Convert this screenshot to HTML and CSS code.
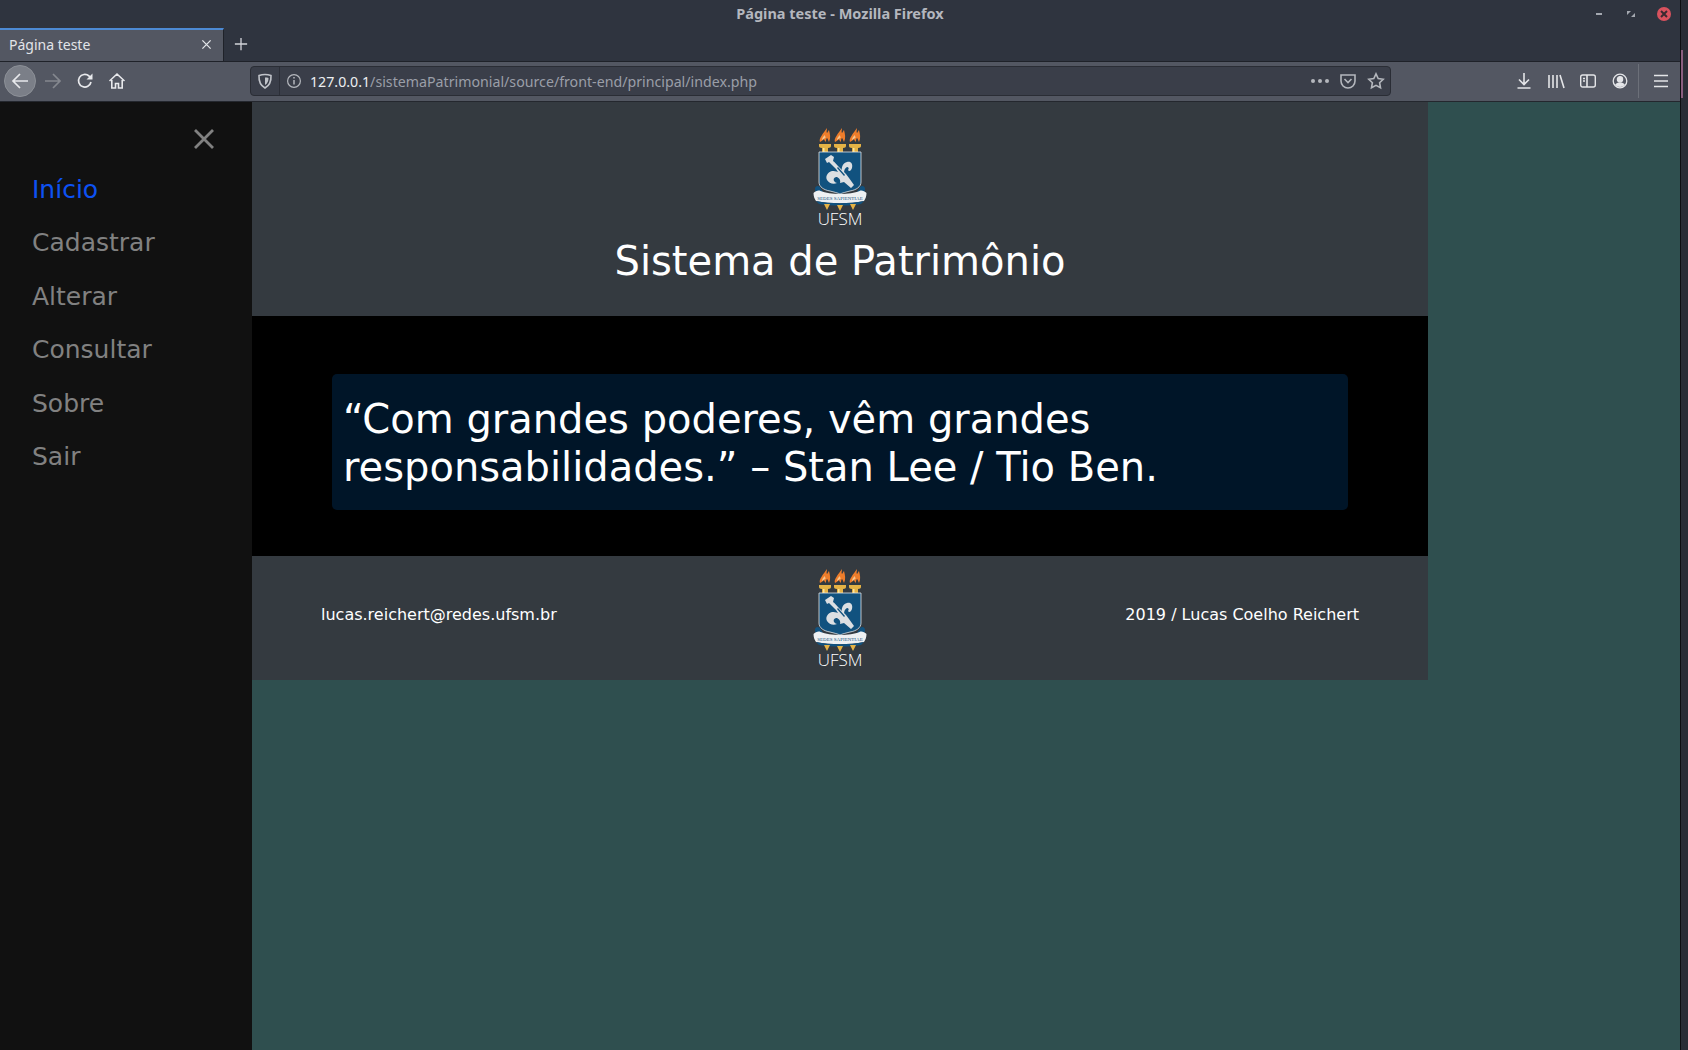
FILE: index.html
```html
<!DOCTYPE html>
<html>

	<head>
		<meta charset="UTF-8">
		<title>Página teste</title>
		<link rel="stylesheet" href="styles.css">
	</head>

	<body>
		<svg class="defs" width="0" height="0">
			<symbol id="torch" viewBox="0 0 12 26">
				<path fill="#ee7d2b" d="M1 15c-1-3 1-5 2-7 1-2 3-4 5-7 0 2-1 4 0 5 1-1 1-2 2-3 1 4 2 8 0 12-1-2-1-3-2-4-1 1-1 2-1 4-1-1-2-2-2-3-1 1-2 2-4 3z"/>
				<path fill="#f7c58e" d="M3 13c0-2 1-3 3-5 0 1 0 2 1 2-1 1-2 2-4 3z"/>
				<path fill="#e5b245" d="M0 17h12v2c0 1-1 2-3 2v4h-6v-4c-2 0-3-1-3-2z"/>
				<path fill="#fbe39a" d="M4 21h1.500v4h-1.500z"/>
			</symbol>
			<symbol id="crest" viewBox="0 0 54 84">
				<use href="#torch" x="6" y="0" width="12" height="26"/>
				<use href="#torch" x="21" y="0" width="12" height="26"/>
				<use href="#torch" x="36" y="0" width="12" height="26"/>
				<path fill="#11527f" stroke="#dfe4e8" stroke-width=".8" d="M6 25h42v30c0 5-5 8-11 9-4 1-8 2-10 3-2-1-6-2-10-3-6-1-11-4-11-9z"/>
				<path fill="#dcdfe2" d="M12 32l6-4 3 2-1 4c2 1 3 3 5 5l5 5 3 3 3 4 5 7-3 3-7-6-4 1c1-3-1-5-3-6-2 0-4 1-3 4 1 1 2 2 3 2-4 2-8 0-10-3-2-4 1-8 5-9 2 0 4 0 6 1l-2-3-4-4-3-3-2 1z"/>
				<path fill="#dcdfe2" d="M29 45c-1-5 1-9 5-10 4-1 6 2 5 6-1 3-3 4-4 2 1-1 1-3-1-3-2 1-3 3-3 6l1 3z"/>
				<path fill="#11527f" d="M24 41l1-1 7 8-1 1z"/>
				<path fill="#11527f" d="M2 62c0-3 3-4 5-2l3 5-7 3zM52 62c0-3-3-4-5-2l-3 5 7 3z"/>
				<path fill="#eef0f2" d="M.5 66c2-2 5-3 7-2 5 2 12 3 19.500 3s15-1 19.500-3c2-1 5 0 7 2 0 3-1 6-2.500 8-15 3-33 3-48 0-1.500-2-2.500-5-2.500-8z"/>
				<path fill="#11527f" d="M3 74c14 3 34 3 48 0l-3 3c-13 2-29 2-42 0z"/>
				<path fill="#e5b245" d="M11 77h6l-3 6zM24 78h6l-3 6zM37 77h6l-3 6z"/>
			</symbol>
		</svg>

		<div class="window">
			<header class="chrome">
				<div class="titlebar">
					<span class="winTitle">Página teste - Mozilla Firefox</span>
					<div class="winBtns">
						<svg class="winBtn" viewBox="0 0 12 12"><path fill="#a4a8b0" d="M0 5h6v2h-6z" transform="translate(3)"/></svg>
						<svg class="winBtn" viewBox="0 0 12 12"><path fill="#a4a8b0" d="M2 3h4l-4 4zM10 9h-4l4-4z"/></svg>
						<span class="winClose"><svg viewBox="0 0 14 14"><path stroke="#3a2a30" stroke-width="2" d="M4 4l6 6M10 4l-6 6"/></svg></span>
					</div>
				</div>
				<div class="tabs">
					<div class="tab">
						<span>Página teste</span>
						<svg class="tabX" viewBox="0 0 12 12"><path stroke="#e4e6ea" stroke-width="1.400" d="M1.500 1.500l9 9M10.500 1.500l-9 9"/></svg>
					</div>
					<svg class="newTab" viewBox="0 0 16 16"><path stroke="#d2d4d9" stroke-width="1.500" d="M8 1v14M1 8h14"/></svg>
				</div>
				<div class="toolbar">
					<div class="navBtns">
						<span class="backBtn"><svg class="ico" viewBox="0 0 18 18" fill="none" stroke="#e8e9ec" stroke-width="1.700"><path d="M2 9h15M9 2l-7 7 7 7"/></svg></span>
						<svg class="ico" viewBox="0 0 18 18" fill="none" stroke="#85888f" stroke-width="1.700"><path d="M1 9h15M9 2l7 7-7 7"/></svg>
						<svg class="ico" viewBox="0 0 18 18" fill="none" stroke="#e8e9ec" stroke-width="1.700"><path d="M15 10a6.300 6.300 0 1 1-2-6l2.500 2.500"/><path fill="#e8e9ec" stroke="none" d="M16.500 1.500v6h-6z"/></svg>
						<svg class="ico" viewBox="0 0 18 18" fill="none" stroke="#e8e9ec" stroke-width="1.600"><path d="M1.500 9l7.500-7 7.500 7M3.800 8v8h3.700v-4.500h3v4.500h3.700v-8"/></svg>
					</div>
					<div class="urlbar">
						<span class="urlLeft">
							<svg class="ico" viewBox="0 0 18 18"><path fill="none" stroke="#c0c3c9" stroke-width="1.600" d="M3 3.500c4-1.300 8-1.300 12 0 .3 5.500-1.500 10-6 12.500-4.500-2.500-6.300-7-6-12.500z"/><path fill="#c0c3c9" d="M9 5.500c1.500 0 2.500.1 3.500.4 0 3-1 5.500-3.500 7.200z"/></svg>
						</span>
						<svg class="ico infoIco" viewBox="0 0 18 18" fill="none" stroke="#b4b7bd" stroke-width="1.200"><circle cx="9" cy="9" r="6.400"/><path stroke-width="1.500" d="M9 8v4.500M9 5v1.500"/></svg>
						<span class="url"><b>127.0.0.1</b>/sistemaPatrimonial/source/front-end/principal/index.php</span>
						<span class="dots"><i></i><i></i><i></i></span>
						<svg class="ico" viewBox="0 0 18 18" fill="none" stroke="#b4b7bd" stroke-width="1.600"><path d="M2 3h14v6a7 7 0 0 1-14 0z"/><path d="M5.500 7l3.500 3.500 3.500-3.500"/></svg>
						<svg class="ico" viewBox="0 0 18 18" fill="none" stroke="#b4b7bd" stroke-width="1.600"><path d="M9 1.800l2.200 4.700 5 .7-3.600 3.500.9 5.100-4.500-2.500-4.500 2.500.9-5.100-3.600-3.500 5-.7z"/></svg>
					</div>
					<div class="tools">
						<svg class="ico" viewBox="0 0 18 18" fill="none" stroke="#e4e5e8" stroke-width="1.600"><path d="M9 1v11M4 7.500l5 5 5-5M2.500 16h13"/></svg>
						<svg class="ico" viewBox="0 0 18 18" fill="none" stroke="#e4e5e8" stroke-width="1.600"><path d="M2 3v13M6 3v13M10 3v13M13 3l4 13"/></svg>
						<svg class="ico" viewBox="0 0 18 18" fill="none" stroke="#e4e5e8" stroke-width="1.400"><rect x="1.700" y="3" width="14.600" height="12" rx="2"/><path stroke-width="1.600" d="M8 3v12M4 6.500h2M4 9h2"/></svg>
						<svg class="ico" viewBox="0 0 18 18" fill="none" stroke="#e4e5e8" stroke-width="1.300"><circle cx="9" cy="9" r="6.800"/><circle cx="9" cy="7.200" r="2.600" fill="#e4e5e8"/><path fill="#e4e5e8" stroke="none" d="M4 13c1-2 3-2.800 5-2.800s4 .8 5 2.800c-3 2.500-7 2.500-10 0z"/></svg>
						<span class="sep"></span>
						<svg class="ico" viewBox="0 0 18 18" fill="none" stroke="#e4e5e8" stroke-width="1.700"><path d="M2 3.500h14M2 9h14M2 14.500h14"/></svg>
					</div>
				</div>
			</header>

			<div class="page">
				<aside class="sidebar">
					<div class="closeRow">
						<svg class="closeX" viewBox="0 0 20 20"><path stroke="#818181" stroke-width="2.800" d="M1 1l18 18M19 1l-18 18"/></svg>
					</div>
					<nav class="sideNav">
						<a class="active" href="#">Início</a>
						<a href="#">Cadastrar</a>
						<a href="#">Alterar</a>
						<a href="#">Consultar</a>
						<a href="#">Sobre</a>
						<a href="#">Sair</a>
					</nav>
				</aside>
				<main class="content">
					<section class="top">
						<div class="logo">
							<svg class="crest" viewBox="0 0 54 84"><use href="#crest"/><text class="motto" x="27" y="72.500" text-anchor="middle">SEDES SAPIENTIAE</text></svg>
							<span>UFSM</span>
						</div>
						<h1>Sistema de Patrimônio</h1>
					</section>
					<section class="middle">
						<p class="quote">“Com grandes poderes, vêm grandes responsabilidades.” – Stan Lee / Tio Ben.</p>
					</section>
					<footer class="bottom">
						<span>lucas.reichert@redes.ufsm.br</span>
						<div class="logo">
							<svg class="crest" viewBox="0 0 54 84"><use href="#crest"/><text class="motto" x="27" y="72.500" text-anchor="middle">SEDES SAPIENTIAE</text></svg>
							<span>UFSM</span>
						</div>
						<span>2019 / Lucas Coelho Reichert</span>
					</footer>
				</main>
			</div>
		</div>
		<div class="desktop"><span class="desktopLine"></span></div>
	</body>

</html>
```

FILE: styles.css
```css
html,
body {
	width: 100%;
	height: 100%;
	margin: 0;
	overflow: hidden;
}

body {
	display: flex;
	font-family: "DejaVu Sans", sans-serif;
	background: #2c2f38;
}

.defs {
	position: absolute;
}

.window {
	width: 1680px;
	height: 1050px;
	border-right: 1px solid #0d0e11;
	display: flex;
	flex-direction: column;
	flex: none;
}

.desktop {
	flex: 1;
	padding-top: 50px;
	background: #2a2d36;
}

.desktopLine {
	display: block;
	width: 2px;
	height: 48px;
	background: #8a5f80;
}

/* firefox chrome */
.chrome {
	background: #2f343f;
	font-family: "Noto Sans", sans-serif;
	flex: none;
}

.titlebar {
	height: 28px;
	display: flex;
	justify-content: center;
	align-items: center;
	position: relative;
}

.winTitle {
	font: bold 14.500px "Noto Sans", sans-serif;
	color: #b4b7be;
	margin-bottom: 2px;
}

.winBtns {
	position: absolute;
	right: 9px;
	top: 7px;
	display: flex;
	align-items: center;
	gap: 20px;
}

.winBtn {
	width: 12px;
	height: 12px;
}

.winClose {
	width: 14px;
	height: 14px;
	border-radius: 50%;
	background: #d9525e;
	display: flex;
}

.tabs {
	height: 33px;
	display: flex;
	align-items: center;
}

.tab {
	width: 224px;
	height: 33px;
	box-sizing: border-box;
	border-top: 2px solid #4d8ad4;
	border-right: 1px solid #1f2229;
	background: #535762;
	color: #e2e4e8;
	font-size: 14px;
	display: flex;
	align-items: center;
	justify-content: space-between;
	padding: 0 11px 2px 9px;
}

.tabX {
	width: 11px;
	height: 11px;
}

.newTab {
	width: 14px;
	height: 14px;
	margin: 0 0 2px 10px;
}

.toolbar {
	height: 41px;
	box-sizing: border-box;
	background: #535762;
	border-top: 1px solid #1f2229;
	border-bottom: 1px solid #24272e;
	display: flex;
	align-items: center;
	padding-bottom: 1px;
}

.ico {
	width: 18px;
	height: 18px;
	flex: none;
}

.navBtns {
	width: 250px;
	padding-left: 4px;
	box-sizing: border-box;
	display: flex;
	align-items: center;
	gap: 14px;
	flex: none;
}

.backBtn {
	width: 32px;
	height: 32px;
	border-radius: 50%;
	background: #7b7f88;
	border: 1px solid #8c9097;
	box-sizing: border-box;
	display: flex;
	align-items: center;
	justify-content: center;
	margin-right: -6px;
}

.urlbar {
	width: 1141px;
	height: 30px;
	box-sizing: border-box;
	background: #3a3e49;
	border: 1px solid #2a2d35;
	border-radius: 4px;
	display: flex;
	align-items: center;
	gap: 10px;
	padding-right: 5px;
	color: #9a9ea8;
	font-size: 14.200px;
	flex: none;
}

.urlLeft {
	height: 100%;
	display: flex;
	align-items: center;
	padding: 0 5px 0 5px;
	border-right: 1px solid #2c2f38;
	margin-right: -5px;
}

.infoIco {
	margin-right: -3px;
}

.url {
	flex: 1;
}

.url b {
	font-weight: normal;
	color: #eceef1;
}

.dots {
	display: flex;
	gap: 3px;
}

.dots i {
	width: 4px;
	height: 4px;
	border-radius: 50%;
	background: #b4b7bd;
}

.tools {
	flex: 1;
	display: flex;
	justify-content: flex-end;
	align-items: center;
	gap: 14px;
	padding-right: 10px;
}

.sep {
	width: 1px;
	height: 34px;
	margin: 0 -1px 0 -5px;
	background: #6c7079;
}

/* page */
.page {
	flex: 1;
	display: flex;
	background: #2f4f4f;
	align-items: flex-start;
	min-height: 0;
}

.sidebar {
	width: 252px;
	align-self: stretch;
	background: #111111;
	flex: none;
}

.closeRow {
	display: flex;
	justify-content: flex-end;
	padding: 27px 38px 0 0;
}

.closeX {
	width: 20px;
	height: 20px;
}

.sideNav {
	margin-top: 14px;
	display: flex;
	flex-direction: column;
}

.sideNav a {
	font-size: 25px;
	line-height: 53.400px;
	padding-left: 32px;
	color: #818181;
	text-decoration: none;
}

.sideNav a.active {
	color: #0d52f2;
}

.content {
	width: 1176px;
	color: #fff;
}

.top {
	height: 214px;
	background: #343a40;
	box-sizing: border-box;
	padding-top: 25px;
	display: flex;
	flex-direction: column;
	align-items: center;
}

.top h1 {
	margin: 10px 0 0;
	font-size: 40px;
	line-height: 48px;
	font-weight: normal;
}

.logo {
	display: flex;
	flex-direction: column;
	align-items: center;
	color: #fff;
}

.crest {
	width: 54px;
	height: 84px;
}

.motto {
	font: 5px "Liberation Serif", serif;
	fill: #11527f;
}

.logo span {
	font: 300 17px/17px "Open Sans", sans-serif;
	margin-top: -1px;
}

.middle {
	height: 240px;
	background: #000;
	box-sizing: border-box;
	padding: 58px 80px 0;
}

.quote {
	margin: 0;
	height: 136px;
	box-sizing: border-box;
	padding: 21px 11px 0;
	border-radius: 5px;
	background: #001528;
	font-size: 40px;
	line-height: 48px;
}

.bottom {
	height: 124px;
	background: #343a40;
	box-sizing: border-box;
	padding: 12px 69px 0;
	display: flex;
	justify-content: space-between;
	align-items: flex-start;
	font-size: 16px;
}

.bottom > span {
	margin-top: 37px;
}

.bottom .logo {
	margin-left: -2px;
}
```
